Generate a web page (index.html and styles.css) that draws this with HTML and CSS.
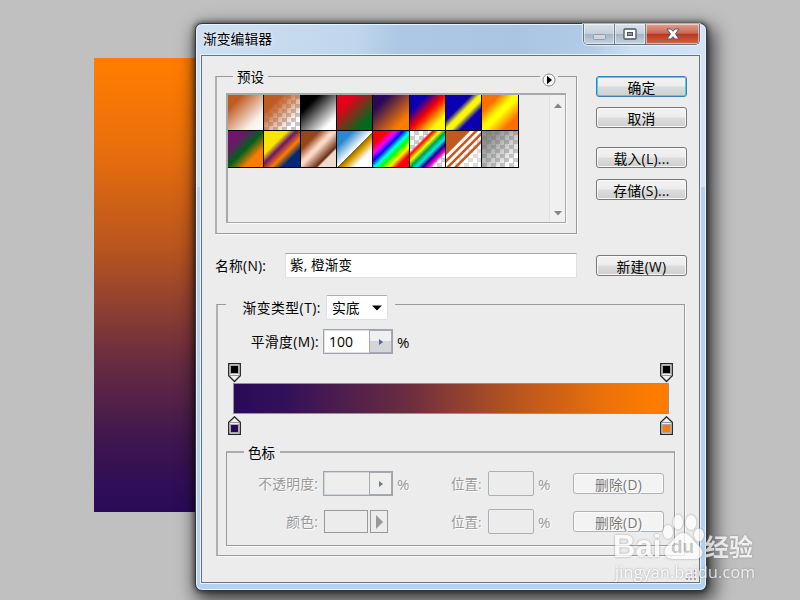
FILE: index.html
```html
<!DOCTYPE html>
<html lang="zh-CN">
<head>
    <meta charset="utf-8">
    <title>渐变编辑器</title>
    <link rel="stylesheet" href="styles.css">
</head>
<body>
    <div class="desktop">
        <div class="canvas"></div>
        <div class="window">
            <div class="titlebar">
                <span class="title">渐变编辑器</span>
                <div class="controls">
                    <span class="ctl min"><svg width="14" height="8"><rect x="1.5" y="1.5" width="12" height="5" rx="1" fill="#cfd6de" stroke="#939da9"/></svg></span>
                    <span class="ctl max"><svg width="14" height="12"><rect x="1" y="1" width="12" height="10" rx="1" fill="#fff" stroke="#4c5460" stroke-width="1.3"/><rect x="4.5" y="4.5" width="5" height="3" fill="#8d9aae" stroke="#4c5460"/></svg></span>
                    <span class="ctl close"><svg width="14" height="12" viewBox="0 0 14 12"><path d="M1 1h4L7 3.300 9 1h4L9.500 6l3.500 5H9L7 8.700 5 11H1L4.500 6z" fill="#fff" stroke="#555c6c"/></svg></span>
                </div>
            </div>
            <div class="client">
                <div class="top">
                    <div class="left">
                        <div class="group presets">
                            <div class="legend-row">
                                <span class="legend">预设</span>
                                <span class="menu"><svg width="14" height="14"><circle cx="7" cy="7" r="6" fill="#fafafa" stroke="#888"/><path d="M5 2.800L10 7 5 11.200z" fill="#000"/></svg></span>
                            </div>
                            <div class="list">
                                <div class="swatches">
                                    <i class="sw s1"></i><i class="sw s2"></i><i class="sw s3"></i><i class="sw s4"></i>
                                    <i class="sw s5"></i><i class="sw s6"></i><i class="sw s7"></i><i class="sw s8"></i>
                                    <i class="sw s9"></i><i class="sw s10"></i><i class="sw s11"></i><i class="sw s12"></i>
                                    <i class="sw s13"></i><i class="sw s14"></i><i class="sw s15"></i><i class="sw s16"></i>
                                </div>
                                <div class="scroll">
                                    <svg width="8" height="5"><path d="M0 5L4 0.500 8 5z" fill="#858585"/></svg>
                                    <svg width="8" height="5"><path d="M0 0L4 4.500 8 0z" fill="#858585"/></svg>
                                </div>
                            </div>
                        </div>
                        <div class="name-row">
                            <span class="name-label">名称(N):</span>
                            <span class="name-input">紫, 橙渐变</span>
                        </div>
                    </div>
                    <div class="buttons">
                        <span class="btn primary">确定</span>
                        <span class="btn">取消</span>
                        <span class="btn load">载入(L)...</span>
                        <span class="btn">存储(S)...</span>
                        <span class="btn new">新建(W)</span>
                    </div>
                </div>

                <div class="group editor">
                    <div class="type-row">
                        <span class="lbl">渐变类型(T):</span>
                        <span class="select">实底<svg width="10" height="6"><path d="M0 0.500h10L5 5.500z" fill="#000"/></svg></span>
                    </div>
                    <div class="smooth-row">
                        <span class="lbl">平滑度(M):</span>
                        <span class="spin"><span class="val">100</span><span class="arrow"><svg width="4" height="6"><path d="M0 0L4 3 0 6z" fill="#4c62b4"/></svg></span></span>
                        <span class="pct">%</span>
                    </div>
                    <div class="stops upper">
                        <svg class="stop" width="13" height="20"><path d="M.7.700h11.600v12L6.500 18.500.7 12.700z" fill="#eee" stroke="#222" stroke-width="1.300"/><rect x="2.500" y="2.500" width="8" height="8" fill="#000" stroke="#aaa"/><path d="M1.500 12.500h10" stroke="#999"/></svg>
                        <svg class="stop" width="13" height="20"><path d="M.7.700h11.600v12L6.500 18.500.7 12.700z" fill="#eee" stroke="#222" stroke-width="1.300"/><rect x="2.500" y="2.500" width="8" height="8" fill="#000" stroke="#aaa"/><path d="M1.500 12.500h10" stroke="#999"/></svg>
                    </div>
                    <div class="ramp"></div>
                    <div class="stops lower">
                        <svg class="stop" width="13" height="20"><path d="M.7 18.300h11.600v-12L6.500.8.7 6.300z" fill="#eee" stroke="#222" stroke-width="1.300"/><rect x="2.500" y="8.500" width="8" height="8" fill="#290a59" stroke="#aaa"/><path d="M1.500 6.500h10" stroke="#999"/></svg>
                        <svg class="stop" width="13" height="20"><path d="M.7 18.300h11.600v-12L6.500.8.7 6.300z" fill="#eee" stroke="#222" stroke-width="1.300"/><rect x="2.500" y="8.500" width="8" height="8" fill="#ff7c00" stroke="#aaa"/><path d="M1.500 6.500h10" stroke="#999"/></svg>
                    </div>
                    <div class="group marks">
                        <span class="legend">色标</span>
                        <div class="mark-row">
                            <span class="lbl">不透明度:</span>
                            <span class="spin off"><span class="val"></span><span class="arrow"><svg width="4" height="6"><path d="M0 0L4 3 0 6z" fill="#777"/></svg></span></span>
                            <span class="pct">%</span>
                            <span class="pos">位置:</span>
                            <span class="box"></span>
                            <span class="pct">%</span>
                            <span class="btn off">删除(D)</span>
                        </div>
                        <div class="mark-row">
                            <span class="lbl">颜色:</span>
                            <span class="color"><span class="chip"></span><span class="pick"><svg width="7" height="14"><path d="M0 0L7 7 0 14z" fill="#999"/></svg></span></span>
                            <span class="pct"></span>
                            <span class="pos">位置:</span>
                            <span class="box"></span>
                            <span class="pct">%</span>
                            <span class="btn off">删除(D)</span>
                        </div>
                    </div>
                </div>
                <svg class="grip" width="11" height="10" fill="#aaa"><path d="M8 0h2v2h-2zM4 4h2v2h-2zM8 4h2v2h-2zM0 8h2v2h-2zM4 8h2v2h-2zM8 8h2v2h-2z"/></svg>
            </div>
        </div>

        <div class="watermark">
            <div class="brand">
                <span class="bai">Bai</span>
                <span class="paw">
                    <svg width="44" height="46" viewBox="0 0 44 46"><g fill="#fff"><ellipse cx="7" cy="18" rx="5" ry="7"/><ellipse cx="17" cy="8" rx="5" ry="7.500"/><ellipse cx="30" cy="8.500" rx="5.500" ry="7.500"/><ellipse cx="38" cy="21" rx="5" ry="6.500"/><path d="M22 19C15 19 14 26 7 31c-6 5-4 14 4 14h23c8 0 10-8 4-13-6-5-9-13-16-13z"/></g></svg>
                    <span class="du">du</span>
                </span>
                <span class="jy">经验</span>
            </div>
            <div class="site">jingyan.baidu.com</div>
        </div>
    </div>
</body>
</html>
```

FILE: styles.css
```css
*{
    box-sizing: border-box;
}

body{
    margin: 0;
    font: 14px/20px "Open Sans", "Noto Sans CJK SC", sans-serif;
    color: #000;
}

svg{
    display: block;
    flex: none;
}

.desktop{
    position: relative;
    width: 800px;
    height: 600px;
    overflow: hidden;
    background: #c0c0c0;
}

.canvas{
    position: absolute;
    left: 94px;
    top: 58px;
    width: 130px;
    height: 454px;
    background: linear-gradient(#ff7c00 2%, #e96f0c 20%, #b8551f 42%, #6b2d40 66%, #3d154f 85%, #290a59);
}

/* window */
.window{
    position: absolute;
    left: 195px;
    top: 23px;
    width: 512px;
    height: 568px;
    padding: 0 5px;
    border: 1px solid #2f3840;
    border-radius: 7px;
    background: linear-gradient(100deg, #cfe0f2, #c0d6ed 30%, #adc8e4 38%, #a9c5e1 60%, #b2cce8 74%, #cbdff3 82%, #d3e4f5) 0 0 / 100% 163px no-repeat, #b4d2ef;
    box-shadow: inset 0 0 0 1px #eaf4fc, 0 0 5px 1px rgba(0,0,0,.5), 4px 7px 18px 4px rgba(0,0,0,.65);
}

.titlebar{
    display: flex;
    justify-content: space-between;
    height: 31px;
}

.title{
    padding: 5px 0 0 2px;
    line-height: 20px;
    font-size: 13.800px;
    text-shadow: 0 0 5px #fff;
}

.controls{
    display: flex;
    width: 117px;
    height: 21px;
    margin-right: 1px;
    border: 1px solid #65717e;
    border-top: 0;
    border-radius: 0 0 5px 5px;
    box-shadow: 0 0 0 1px rgba(255,255,255,.6);
    overflow: hidden;
}

.ctl{
    display: flex;
    align-items: center;
    justify-content: center;
    width: 31px;
    background: linear-gradient(#dbe3eb, #c3cfdb 48%, #a5b3c3 52%, #c5d4e3);
    border-right: 1px solid #747f8b;
    box-shadow: inset 0 0 0 1px rgba(255,255,255,.5);
}

.ctl.min svg{
    margin-top: 5px;
}

.ctl.close{
    flex: 1;
    border: 0;
    background: linear-gradient(#dfa090, #cc6653 46%, #b83520 52%, #cf6a47);
}

.client{
    position: relative;
    width: 499px;
    height: 528px;
    padding: 20px 0 0 13px;
    border: 1px solid #66727f;
    outline: 1px solid #e8f2fb;
    background: #ececec;
}

.top{
    display: flex;
    gap: 19px;
}

.left{
    width: 362px;
}

.group{
    border: 2px solid #acacac;
    box-shadow: 1px 1px 0 #fafafa;
}

.legend{
    padding: 0 4px;
    background: #ececec;
    font-size: 13.500px;
}

.presets{
    height: 158px;
    padding: 0 9px;
    border-width: 1px 1px 1px 2px;
    border-color: #999 #999 #999 #b0b0b0;
}

.legend-row{
    display: flex;
    justify-content: space-between;
    align-items: flex-start;
    height: 16px;
    padding: 0 9px 0 7px;
}

.legend-row .legend{
    height: 20px;
    margin-top: -10px;
}

.menu{
    margin-top: -4px;
    padding: 0 2px;
    background: #ececec;
}

.list{
    display: flex;
    justify-content: space-between;
    width: 340px;
    height: 130px;
    border: 2px solid #a8a8a8;
    border-right-width: 1px;
    border-bottom-width: 1px;
    box-shadow: 1px 1px 0 #fafafa;
}

.swatches{
    display: grid;
    grid-template-columns: repeat(8, 36.350px);
    grid-template-rows: 36px 37px;
}

.sw{
    border-right: 1px solid #000;
    border-bottom: 1px solid #000;
}

.s1{
    background: linear-gradient(135deg, #c05a20 20%, #f8eee8 75%, #fff);
}

.s2{
    background: linear-gradient(135deg, #c05a20 25%, rgba(192,90,32,0) 80%), repeating-conic-gradient(#c9c5c5 0 25%, #fff 0 50%) 0 0 / 9px 9px;
}

.s3{
    background: linear-gradient(135deg, #000 25%, #fff 82%);
}

.s4{
    background: linear-gradient(135deg, #e60018 25%, #006a1e 80%);
}

.s5{
    background: linear-gradient(135deg, #290a59 22%, #ff7c00 80%);
}

.s6{
    background: linear-gradient(135deg, #0a00b2 25%, #f00 50%, #fffc00 80%);
}

.s7{
    background: linear-gradient(135deg, #0a00b2 36%, #f5f50a 48%, #fdf50a 57%, #0a00b2 70%);
}

.s8{
    background: linear-gradient(135deg, #ff6e02 24%, #ff0 46%, #ff0 54%, #ff6e02 80%);
}

.s9{
    background: linear-gradient(135deg, #6f156c 25%, #00601b 50%, #fd7c00 74%);
}

.s10{
    background: linear-gradient(135deg, #f9e600 32%, #6f156c 45%, #fd7c00 61%, #002874 76%);
}

.s11{
    background: linear-gradient(135deg, #974618 26%, #fbd8c5 44%, #fbd8c5 49%, #6c2e16 72%, #efdbcd 76%);
}

.s12{
    background: linear-gradient(135deg, #2989cc 22%, #fff 51%, #906a00 52%, #d99f00 60%, #fff 76%);
}

.s13{
    background: linear-gradient(135deg, #f00 20%, #f0f 32%, #00f 42%, #0ff 52%, #0f0 61%, #ff0 72%, #f00 83%);
}

.s14{
    background: linear-gradient(135deg, rgba(255,0,0,0) 28%, #f00 33%, #ff0 42%, #00a040 51%, #0ee 60%, #0a0090 68%, #f0c 77%, rgba(255,0,200,0) 83%), repeating-conic-gradient(#ccc 0 25%, #fff 0 50%) 0 0 / 9px 9px;
}

.s15{
    background: linear-gradient(135deg, #c05a20 33%, #fff 35% 39%, #c05a20 41% 44%, #fff 46% 50%, #c05a20 52% 55%, transparent 57% 61%, #c05a20 63% 66%, transparent 68%), repeating-conic-gradient(#ddd 0 25%, #fff 0 50%) 0 0 / 9px 9px;
}

.s16{
    background: linear-gradient(135deg, rgba(110,110,110,.8) 18%, rgba(150,150,150,0) 85%), repeating-conic-gradient(#ccc 0 25%, #fff 0 50%) 0 0 / 9px 9px;
}

.scroll{
    display: flex;
    flex-direction: column;
    justify-content: space-between;
    align-items: center;
    width: 16px;
    padding: 8px 0 6px;
    background: #f0f0f0;
    border-left: 1px solid #e0e0e0;
}

.name-row{
    display: flex;
    align-items: center;
    margin-top: 19px;
    height: 25px;
}

.name-label{
    width: 70px;
    font-size: 13.800px;
    letter-spacing: .25px;
}

.name-input{
    flex: 1;
    height: 25px;
    padding: 0 4px;
    border: 1px solid #dde0e8;
    border-top-color: #a5a8b0;
    background: #fff;
    line-height: 23px;
    font-size: 13.500px;
    letter-spacing: .2px;
}

.buttons{
    display: flex;
    flex-direction: column;
    align-items: flex-start;
}

.btn{
    width: 91px;
    height: 21px;
    margin-bottom: 11px;
    border: 1px solid #777;
    border-radius: 3px;
    background: linear-gradient(#f3f3f3, #ececec 48%, #dcdcdc 52%, #cfcfcf);
    box-shadow: inset 0 0 0 1px #fafafa;
    font-size: 13.800px;
    letter-spacing: .3px;
    line-height: 21px;
    text-align: center;
}

.btn.primary{
    margin-bottom: 10px;
    border-color: #3c7fb1;
    box-shadow: inset 0 0 0 1px #47d0f5;
}

.btn.load{
    margin-top: 8px;
}

.btn.new{
    margin: 44px 0 0;
}

.btn.off{
    margin: 0;
    border-color: #adb2b5;
    background: #f3f3f3;
    color: #777;
}

/* gradient editor */
.editor{
    width: 469px;
    height: 252px;
    margin: 26px 0 0 1px;
    padding: 0 8px;
    border-width: 1px 1px 1px 2px;
    border-color: #999 #999 #999 #b0b0b0;
}

.lbl{
    text-align: right;
    white-space: nowrap;
    font-size: 13.800px;
    letter-spacing: .2px;
}

.type-row{
    display: flex;
    align-items: center;
    width: 169px;
    height: 25px;
    margin-top: -10px;
    background: #ececec;
}

.type-row .lbl{
    width: 95px;
    margin-right: 5px;
    letter-spacing: .5px;
    direction: ltr;
    display: flex;
    justify-content: flex-end;
}

.select{
    display: flex;
    align-items: center;
    justify-content: space-between;
    width: 62px;
    height: 25px;
    padding: 0 5px 0 5px;
    border: 1px solid #dde0e8;
    border-top-color: #abadb3;
    border-radius: 2px;
    background: #fff;
    font-size: 13.800px;
}

.smooth-row{
    display: flex;
    align-items: center;
    height: 25px;
    margin-top: 9px;
}

.smooth-row .lbl{
    width: 93px;
    margin-right: 4px;
    letter-spacing: .4px;
}

.spin{
    display: flex;
    width: 70px;
    height: 25px;
    border: 1px solid #a0a3a8;
    background: #fff;
    box-shadow: inset 0 0 0 1px rgba(160,163,175,.35);
}

.val{
    width: 45px;
    padding-left: 5px;
    line-height: 23px;
}

.arrow{
    display: flex;
    flex: 1;
    align-items: center;
    justify-content: center;
    border: 1px solid #a8a8b5;
    background: linear-gradient(#f0f0f0 50%, #d5d5d8 50%);
}

.pct{
    width: 15px;
    margin-left: 4px;
    font-size: 15px;
}

.stops{
    display: flex;
    justify-content: space-between;
    width: 445px;
    height: 20px;
    margin-left: 2px;
}

.stops.upper{
    margin-top: 9px;
}

.ramp{
    width: 436px;
    height: 31px;
    margin: 0 0 2px 7px;
    border: 1px solid #929292;
    background: linear-gradient(90deg, #290a59, #34105a 12%, #6b2d40 40%, #b8551f 65%, #ea700a 85%, #ff7c00 97%);
}

.marks{
    width: 449px;
    height: 95px;
    margin-top: 15px;
    padding: 0 8px 0 0;
    border-width: 2px 1px 1px;
    border-color: #acacac #999 #999;
}

.marks > .legend{
    display: block;
    width: 36px;
    height: 20px;
    margin: -10px 0 0 17px;
}

.mark-row{
    display: flex;
    align-items: center;
    height: 25px;
    margin: 8px 0 13px;
    color: #999;
    text-shadow: 1px 1px 0 #fff;
}

.mark-row .lbl{
    width: 91px;
    margin-right: 5px;
}

.off.spin, .off .arrow{
    background: #eee;
}

.pos{
    width: 33px;
    margin-left: 39px;
    font-size: 13.500px;
    white-space: nowrap;
}

.box{
    width: 46px;
    height: 25px;
    margin-left: 4px;
    border: 1px solid #adb0b2;
    border-radius: 2px;
}

.mark-row .btn{
    margin-left: 20px;
}

.color{
    display: flex;
    gap: 2px;
    width: 70px;
    padding-left: 1px;
}

.chip{
    width: 44px;
    height: 23px;
    border: 1px solid #999;
}

.pick{
    display: flex;
    align-items: center;
    justify-content: center;
    width: 18px;
    height: 23px;
    border: 1px solid #999;
}

.grip{
    position: absolute;
    right: 2px;
    bottom: 2px;
}

/* watermark over the window corner */
.watermark{
    position: absolute;
    left: 613px;
    top: 514px;
    width: 150px;
    color: #fff;
    opacity: .75;
    filter: drop-shadow(0 0 1px rgba(110,110,110,.8));
}

.brand{
    display: flex;
    height: 46px;
    align-items: flex-end;
}

.bai{
    width: 48px;
    font: bold 31px/26px "Liberation Sans", sans-serif;
}

.paw{
    position: relative;
    width: 44px;
}

.du{
    position: absolute;
    left: 10px;
    top: 23px;
    color: #bbb;
    font: bold 19px/20px "Liberation Sans", sans-serif;
}

.jy{
    font: bold 24px/28px "Noto Sans CJK SC", sans-serif;
    white-space: nowrap;
}

.site{
    padding-left: 2px;
    font: 16px/24px "Open Sans", sans-serif;
    letter-spacing: .25px;
}
```
